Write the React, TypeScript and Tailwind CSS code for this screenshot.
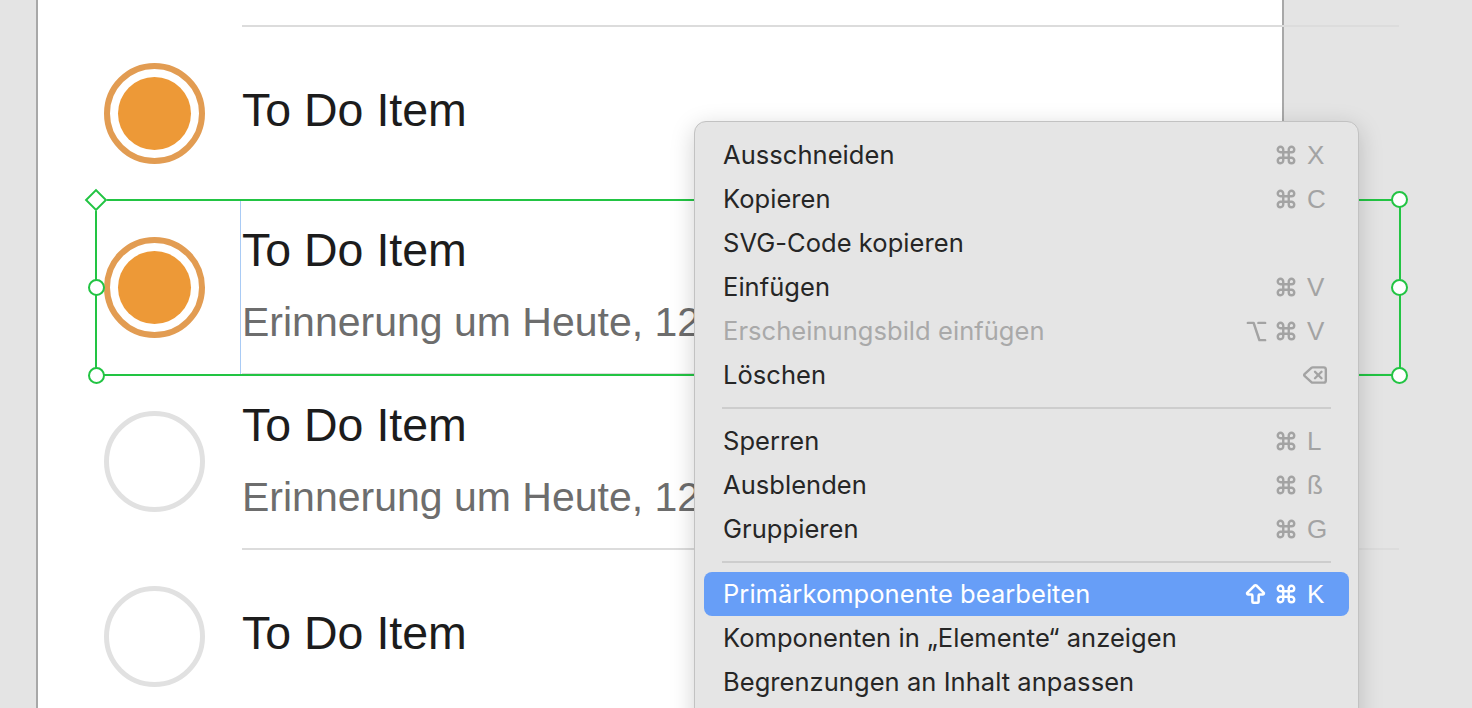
import React from "react";
import { Command, Option, ArrowBigUp, Delete } from "lucide-react";

const TITLE = "font-['Liberation_Sans',Arial,sans-serif] text-[46.5px] leading-[54px] text-[#1c1c1c]";
const SUB = "font-['Liberation_Sans',Arial,sans-serif] text-[41px] leading-[46px] text-[#6d6d6d]";

function Check({ done }: { done: boolean }) {
  return (
    <svg width="101" height="101" viewBox="0 0 101 101" className="shrink-0">
      <circle
        cx="50.5"
        cy="50.5"
        r={done ? 47.5 : 48}
        fill="none"
        stroke={done ? "#e29c52" : "#e1e1e1"}
        strokeWidth={done ? 6 : 5}
      />
      {done && <circle cx="50.5" cy="50.5" r="36.5" fill="#ed9937" />}
    </svg>
  );
}

function Row({ done, sub, h }: { done: boolean; sub?: boolean; h: string }) {
  return (
    <div className={`flex items-center ${h}`}>
      <div className="ml-[8px]">
        <Check done={done} />
      </div>
      <div className="ml-[37px] flex flex-col pb-[6px]">
        <div className={TITLE}>To Do Item</div>
        {sub && <div className={`${SUB} mt-[22px] whitespace-nowrap`}>Erinnerung um Heute, 12</div>}
      </div>
    </div>
  );
}

function Sep() {
  return <div className="ml-[146px] h-[2px] bg-[#dcdcdc]" />;
}

type Item = {
  label: string;
  mods?: string;
  keyc?: React.ReactNode;
  disabled?: boolean;
  active?: boolean;
};

function MenuItem({ it }: { it: Item }) {
  const shortcut = it.active ? "text-white" : "text-[#a3a3a3]";
  const iconColor = it.active ? "#ffffff" : "#a3a3a3";
  return (
    <div
      className={`h-[44px] flex items-center rounded-[8px] pl-[19px] pr-[20px] ${
        it.active ? "bg-[#679ef7] text-white" : it.disabled ? "text-[#a9a9a9]" : "text-[#262626]"
      }`}
    >
      <span className="flex-1 font-['Inter',sans-serif] text-[25.5px] tracking-[0.05px] leading-none">{it.label}</span>
      {it.mods !== undefined && (
        <span className={`flex items-center gap-[7px] ${shortcut}`}>
          {it.mods === "opt" && <Option size={23} strokeWidth={2.6} color={iconColor} />}
          {it.mods === "shift" && <ArrowBigUp size={25} strokeWidth={2.4} color={iconColor} />}
          <Command size={22} strokeWidth={2.6} color={iconColor} />
        </span>
      )}
      <span
        className={`w-[22px] ml-[10px] font-['Liberation_Sans',Arial,sans-serif] text-[26px] leading-none ${shortcut}`}
      >
        {it.keyc}
      </span>
    </div>
  );
}

function MenuSep({ h }: { h: string }) {
  return (
    <div className={`${h} flex items-center px-[18px]`}>
      <div className="h-[2px] w-full bg-[#cdcdcd]" />
    </div>
  );
}

export default function App() {
  const g1: Item[] = [
    { label: "Ausschneiden", mods: "cmd", keyc: "X" },
    { label: "Kopieren", mods: "cmd", keyc: "C" },
    { label: "SVG-Code kopieren" },
    { label: "Einfügen", mods: "cmd", keyc: "V" },
    { label: "Erscheinungsbild einfügen", mods: "opt", keyc: "V", disabled: true },
    {
      label: "Löschen",
      keyc: (
        <span className="-ml-[5px] block">
          <Delete size={26} strokeWidth={2.2} color="#a3a3a3" />
        </span>
      ),
    },
  ];
  const g2: Item[] = [
    { label: "Sperren", mods: "cmd", keyc: "L" },
    { label: "Ausblenden", mods: "cmd", keyc: "ß" },
    { label: "Gruppieren", mods: "cmd", keyc: "G" },
  ];
  const g3: Item[] = [
    { label: "Primärkomponente bearbeiten", mods: "shift", keyc: "K", active: true },
    { label: "Komponenten in „Elemente“ anzeigen" },
    { label: "Begrenzungen an Inhalt anpassen" },
  ];

  const hc = "absolute w-[17px] h-[17px] rounded-full bg-white border-2 border-[#22c443]";

  return (
    <div className="relative w-[1472px] h-[708px] overflow-hidden bg-[#e4e4e4] flex">
      <div className="ml-[36px] w-[1248px] h-full shrink-0 bg-white border-x-2 border-[#a8a8a8]">
        <div className="ml-[58px] w-[1303px]">
          <div className="h-[25px]" />
          <Sep />
          <Row done h="h-[172px]" />
          <Sep />
          <Row done sub h="h-[172px]" />
          <Sep />
          <Row done={false} sub h="h-[173px]" />
          <Sep />
          <Row done={false} h="h-[172px]" />
        </div>
      </div>

      {/* text bounding line */}
      <div className="absolute left-[240px] top-[201px] w-px h-[173px] bg-[#a9cbf5]" />

      {/* selection box */}
      <div className="absolute left-[95px] top-[199px] w-[1306px] h-[177px] border-2 border-[#22c443]" />
      <div className="absolute left-[88px] top-[192px] w-[16px] h-[16px] rotate-45 bg-white border-2 border-[#22c443]" />
      <div className={`${hc} left-[88px] top-[279px]`} />
      <div className={`${hc} left-[88px] top-[367px]`} />
      <div className={`${hc} left-[1391px] top-[191px]`} />
      <div className={`${hc} left-[1391px] top-[279px]`} />
      <div className={`${hc} left-[1391px] top-[367px]`} />

      {/* context menu */}
      <div className="absolute left-[694px] top-[121px] w-[665px] h-[640px] rounded-[12px] bg-[#e5e5e5] border border-[#c2c2c2] shadow-[0_6px_24px_rgba(0,0,0,0.18)] pt-[11px] px-[9px]">
        {g1.map((it) => (
          <MenuItem key={it.label} it={it} />
        ))}
        <MenuSep h="h-[22px]" />
        {g2.map((it) => (
          <MenuItem key={it.label} it={it} />
        ))}
        <MenuSep h="h-[21px]" />
        {g3.map((it) => (
          <MenuItem key={it.label} it={it} />
        ))}
      </div>
    </div>
  );
}
